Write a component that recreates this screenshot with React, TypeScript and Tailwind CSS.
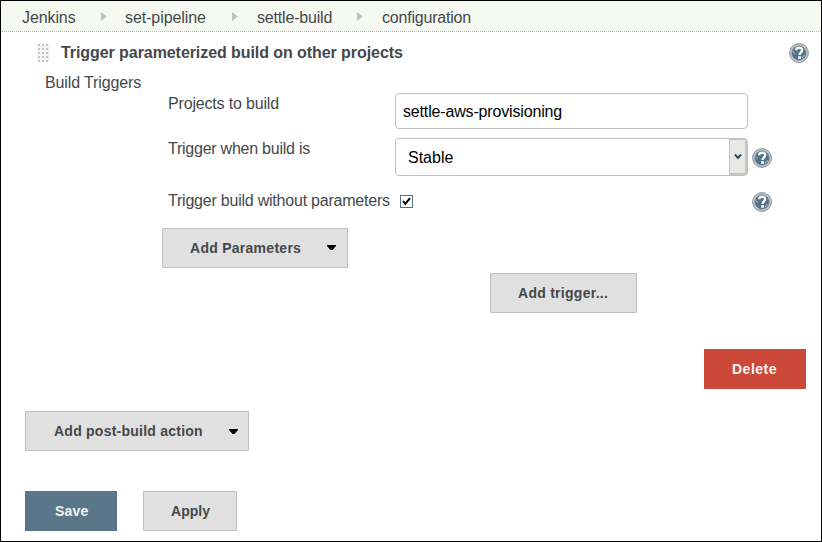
import type { ReactNode } from 'react';

function HelpIcon() {
  return (
    <svg className="block h-5 w-5 shrink-0" viewBox="0 0 20 20" role="img" aria-label="Help">
      <circle cx="10" cy="10" r="9.4" fill="#c3c7c9" stroke="#8796a1" strokeWidth="1" />
      <circle cx="10" cy="10" r="7.1" fill="#4f7189" stroke="#6b8294" strokeWidth="0.8" />
      <path d="M3.6 8.5 6 10.5M13 15 15.5 12" stroke="#c3c7c9" strokeWidth="1" />
      <path
        d="M7 7.2C7.3 5.3 8.5 4.8 10.2 4.8c1.8 0 3 .9 3 2.4 0 2.2-2.6 2.2-2.7 4.8"
        fill="none"
        stroke="#f6f7f4"
        strokeWidth="2.4"
      />
      <rect x="9.1" y="13.2" width="2.9" height="2.6" fill="#f6f7f4" />
    </svg>
  );
}

function Separator({ className }: { className: string }) {
  return (
    <svg className={`h-[9px] w-[6px] ${className}`} viewBox="0 0 6 9" aria-hidden="true">
      <path d="M0 0 6 4.5 0 9Z" fill="#bfc2c4" />
    </svg>
  );
}

function Caret({ className }: { className: string }) {
  return (
    <svg className={`h-[5px] w-[9px] ${className}`} viewBox="0 0 9 5" aria-hidden="true">
      <path d="M0 0H9V1L5.5 5H3.5L0 1Z" fill="#000" />
    </svg>
  );
}

function GrayButton({ className, children }: { className: string; children: ReactNode }) {
  return (
    <button
      className={`flex h-10 items-center rounded-[1px] border border-[#c0c0c0] bg-[#e0e0e0] text-[14px] leading-5 font-bold whitespace-nowrap text-[#45484b] ${className}`}
    >
      {children}
    </button>
  );
}

function DragHandle() {
  return (
    <svg className="mt-[11px] ml-9 block h-[19px] w-[13px]" viewBox="0 0 13 19" aria-hidden="true">
      <defs>
        <pattern id="grip" width="4" height="4" patternUnits="userSpaceOnUse">
          <rect width="4" height="4" fill="#f5f5f4" />
          <rect x="1" y="1" width="2" height="2" fill="#c3c5c4" />
        </pattern>
      </defs>
      <rect width="13" height="19" fill="url(#grip)" />
    </svg>
  );
}

export default function App() {
  return (
    <div className="h-[542px] w-[822px] overflow-hidden border border-black bg-white font-['Liberation_Sans',Arial,sans-serif] text-[16px] leading-5 whitespace-nowrap text-[#45484b]">
      <nav className="flex h-[31px] items-center border-b border-dotted border-[#b5b8b5] bg-[#f6f9f2] pt-1 pl-[21px]">
        <span className="w-[79px] tracking-[-0.1px]">Jenkins</span>
        <Separator className="mr-[18px] -mt-[3px]" />
        <span className="w-[107px] tracking-[-0.08px]">set-pipeline</span>
        <Separator className="mr-[19px] -mt-[3px]" />
        <span className="w-[100px] tracking-[-0.18px]">settle-build</span>
        <Separator className="mr-[19px] -mt-[3px]" />
        <span className="tracking-[-0.2px]">configuration</span>
      </nav>

      <main>
        <header className="flex h-[41px]">
          <DragHandle />
          <h1 className="mt-[11px] ml-[11px] flex-1 font-bold tracking-[-0.07px]">
            Trigger parameterized build on other projects
          </h1>
          <div className="mt-[11px] mr-3">
            <HelpIcon />
          </div>
        </header>
        <h2 className="ml-11 h-5 tracking-[-0.13px]">Build Triggers</h2>

        <div className="ml-[167px] flex h-[45px]">
          <label className="w-[227px] pt-px tracking-[-0.17px]" htmlFor="projects">
            Projects to build
          </label>
          <input
            id="projects"
            className="h-9 w-[353px] rounded-[4px] border border-[#bfc1c0] bg-white px-[7px] pt-0.5 tracking-[-0.16px] text-black"
            defaultValue="settle-aws-provisioning"
          />
        </div>
        <div className="ml-[167px] flex h-[53px]">
          <span className="w-[227px] pt-px tracking-[-0.24px]">Trigger when build is</span>
          <div className="flex h-[38px] w-[353px] overflow-hidden rounded-[4px] border border-[#bfc1c0]">
            <span className="flex flex-1 items-center pt-0.5 pl-3 text-black">Stable</span>
            <span className="flex w-[18px] items-center justify-center border-2 border-t-1 border-l-1 border-[#c3c4c4] bg-[#e7e7e3]">
              <svg className="h-[7px] w-2" viewBox="0 0 8 7" aria-hidden="true">
                <path d="M1 1.5 4 5 7 1.5" fill="none" stroke="#34495a" strokeWidth="2" />
              </svg>
            </span>
          </div>
          <div className="mt-[10px] ml-1">
            <HelpIcon />
          </div>
        </div>
        <div className="ml-[167px] flex h-[37px]">
          <span className="w-[232px] tracking-[-0.22px]">Trigger build without parameters</span>
          <svg className="mt-1 block h-[13px] w-[13px]" viewBox="0 0 13 13" role="img" aria-label="Checked">
            <rect x="0.5" y="0.5" width="12" height="12" fill="#fff" stroke="#4f7189" />
            <path d="M3 6.2 5.3 9 10 3.2" fill="none" stroke="#000" strokeWidth="2" />
          </svg>
          <div className="mt-[1px] ml-[339px]">
            <HelpIcon />
          </div>
        </div>

        <GrayButton className="ml-[161px] w-[186px] pl-[27px] tracking-[0.27px]">
          <span className="flex-1 text-left">Add Parameters</span>
          <Caret className="mr-[11px] -mt-px" />
        </GrayButton>
        <GrayButton className="mt-[5px] ml-[489px] w-[147px] pl-[27px] tracking-[0.27px]">
          Add trigger...
        </GrayButton>
        <button className="mt-9 ml-[703px] flex h-10 w-[102px] items-center bg-[#cc493a] pl-7 text-[14px] font-bold tracking-[0.5px] text-[#f4f4f1]">
          Delete
        </button>
        <GrayButton className="mt-[22px] ml-6 w-[224px] pl-7 tracking-[0.24px]">
          <span className="flex-1 text-left">Add post-build action</span>
          <Caret className="mr-[10px]" />
        </GrayButton>

        <footer className="mt-10 ml-6 flex gap-[26px]">
          <button className="flex h-10 w-[92px] items-center bg-[#5a7789] pl-[30px] text-[14px] font-bold tracking-[0.2px] text-[#f4f4f1]">
            Save
          </button>
          <GrayButton className="w-[94px] pl-[27px] tracking-[0.05px]">Apply</GrayButton>
        </footer>
      </main>
    </div>
  );
}
